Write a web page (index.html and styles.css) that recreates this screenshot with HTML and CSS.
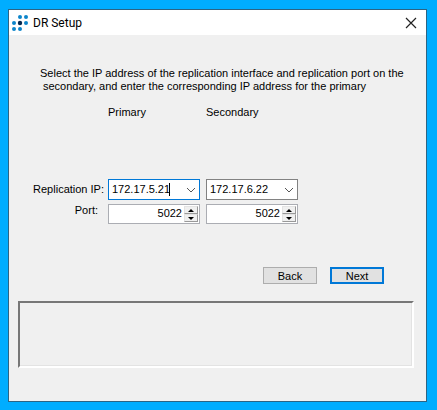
FILE: index.html
```html
<!DOCTYPE html>
<html lang="en">
<head>
<meta charset="utf-8">
<title>DR Setup</title>
<link rel="stylesheet" href="styles.css">
</head>
<body>
<main class="window">
  <header class="titlebar">
    <svg class="logo" width="18" height="18" viewBox="0 0 18 18" aria-hidden="true">
      <g fill="#0c85ca">
        <circle cx="8" cy="3" r="2"/><circle cx="14" cy="3" r="2"/>
        <circle cx="2" cy="9" r="2"/><circle cx="14" cy="9" r="2"/>
        <circle cx="2" cy="15" r="2"/><circle cx="8" cy="15" r="2"/>
      </g>
      <circle cx="8" cy="9" r="2.2" fill="#06284f"/>
    </svg>
    <h1 class="title">DR Setup</h1>
    <button class="close" type="button" aria-label="Close">
      <svg width="12" height="12" viewBox="0 0 12 12"><path d="M1 1L11 11M11 1L1 11" stroke="#222" stroke-width="1.2" fill="none"/></svg>
    </button>
  </header>
  <form class="content">
    <p class="intro">Select the IP address of the replication interface and replication port on the<br><span class="second-line">secondary, and enter the corresponding IP address for the primary</span></p>
    <div class="fields">
      <span class="primary">Primary</span>
      <span>Secondary</span>
      <label class="label" for="ip1">Replication IP:</label>
      <div class="combo active">
        <input id="ip1" type="text" value="172.17.5.21">
        <span class="caret"></span>
        <svg class="chevron" width="10" height="6" viewBox="0 0 10 6"><path d="M1 1L5 5L9 1"/></svg>
      </div>
      <div class="combo">
        <select aria-label="Secondary replication IP"><option>172.17.6.22</option></select>
        <svg class="chevron" width="10" height="6" viewBox="0 0 10 6"><path d="M1 1L5 5L9 1"/></svg>
      </div>
      <label class="label port" for="port1">Port:</label>
      <div class="spinner">
        <input id="port1" type="number" value="5022">
        <div class="steps">
          <button type="button" aria-label="Increase primary port"><svg width="6" height="3" viewBox="0 0 6 3"><path d="M0 3L3 0L6 3Z"/></svg></button>
          <button type="button" aria-label="Decrease primary port"><svg width="6" height="3" viewBox="0 0 6 3"><path d="M0 0L3 3L6 0Z"/></svg></button>
        </div>
      </div>
      <div class="spinner">
        <input type="number" value="5022" aria-label="Secondary port">
        <div class="steps">
          <button type="button" aria-label="Increase secondary port"><svg width="6" height="3" viewBox="0 0 6 3"><path d="M0 3L3 0L6 3Z"/></svg></button>
          <button type="button" aria-label="Decrease secondary port"><svg width="6" height="3" viewBox="0 0 6 3"><path d="M0 0L3 3L6 0Z"/></svg></button>
        </div>
      </div>
    </div>
    <div class="actions">
      <button class="btn" type="button">Back</button>
      <button class="btn default" type="submit">Next</button>
    </div>
    <div class="status"></div>
  </form>
</main>
</body>
</html>
```
FILE: styles.css
```css
* {
  box-sizing: border-box;
}

body {
  margin: 0;
  min-height: 100vh;
  padding: 9px 10px 8px 8px;
  display: flex;
  background: #00adff;
  color: #000;
  font: 11px/13px "Liberation Sans", Arial, sans-serif;
}

button,
input,
select {
  font: inherit;
  color: inherit;
}

.window {
  flex: 1;
  min-width: 0;
  display: flex;
  flex-direction: column;
  border: 1px solid #2d6484;
  background: #f0f0f0;
}

.titlebar {
  display: flex;
  align-items: center;
  height: 25px;
  padding: 0 9px 0 3px;
  background: #fff;
}

.logo {
  flex: none;
}

.title {
  flex: 1;
  margin: 0 0 0 3px;
  font: 12px/16px Roboto, sans-serif;
}

.close {
  display: flex;
  padding: 0;
  border: 0;
  background: none;
}

.content {
  flex: 1;
  display: flex;
  flex-direction: column;
  padding: 32px 12px 0 9px;
}

.intro {
  margin: 0 0 0 22px;
  white-space: nowrap;
}

.second-line {
  margin-left: 3px;
}

.fields {
  display: grid;
  grid-template-columns: 84px 92px 92px;
  grid-template-rows: 69px 21px 20px;
  gap: 4px 6px;
  margin-top: 13px;
}

.primary {
  grid-column: 2;
}

.label {
  justify-self: end;
  align-self: center;
  margin-right: -2px;
  white-space: nowrap;
}

.label.port {
  align-self: start;
  margin-right: 4px;
}

.combo,
.spinner {
  position: relative;
  display: flex;
  background: #fff;
  border: 1px solid #828282;
}

.combo.active {
  border-color: #0078d7;
}

.combo input,
.combo select {
  width: 100%;
  min-width: 0;
  padding: 0 18px 0 3px;
  border: 0;
  outline: 0;
  background: none;
  appearance: none;
}

.chevron {
  position: absolute;
  right: 3px;
  top: 7px;
  fill: none;
  stroke: #555;
  pointer-events: none;
}

.caret {
  position: absolute;
  left: 60px;
  top: 3px;
  width: 1px;
  height: 13px;
  background: #000;
}

.spinner {
  border-color: #abadb3;
  padding: 1px;
}

.spinner input {
  flex: 1;
  min-width: 0;
  padding: 0 2px 2px 0;
  border: 0;
  outline: 0;
  text-align: right;
  appearance: textfield;
}

.spinner input::-webkit-inner-spin-button {
  appearance: none;
  margin: 0;
}

.steps {
  display: flex;
  flex-direction: column;
  width: 14px;
}

.steps button {
  flex: 1;
  display: flex;
  align-items: center;
  justify-content: center;
  min-height: 0;
  padding: 0;
  background: #f0f0f0;
  border: 1px solid;
  border-color: #e3e3e3 #999 #999 #e3e3e3;
}

.actions {
  display: flex;
  justify-content: flex-end;
  gap: 13px;
  margin: 43px 30px 0 0;
}

.btn {
  width: 54px;
  height: 17px;
  padding: 2px 0 0;
  border: 1px solid #adadad;
  background: #e1e1e1;
}

.btn.default {
  border: 2px solid #0078d7;
  padding: 1px 0 0;
}

.status {
  height: 67px;
  margin-top: 17px;
  border: 2px solid;
  border-color: #777 #fff #fff #777;
  box-shadow: inset -1px -1px #e3e3e3;
}
```
